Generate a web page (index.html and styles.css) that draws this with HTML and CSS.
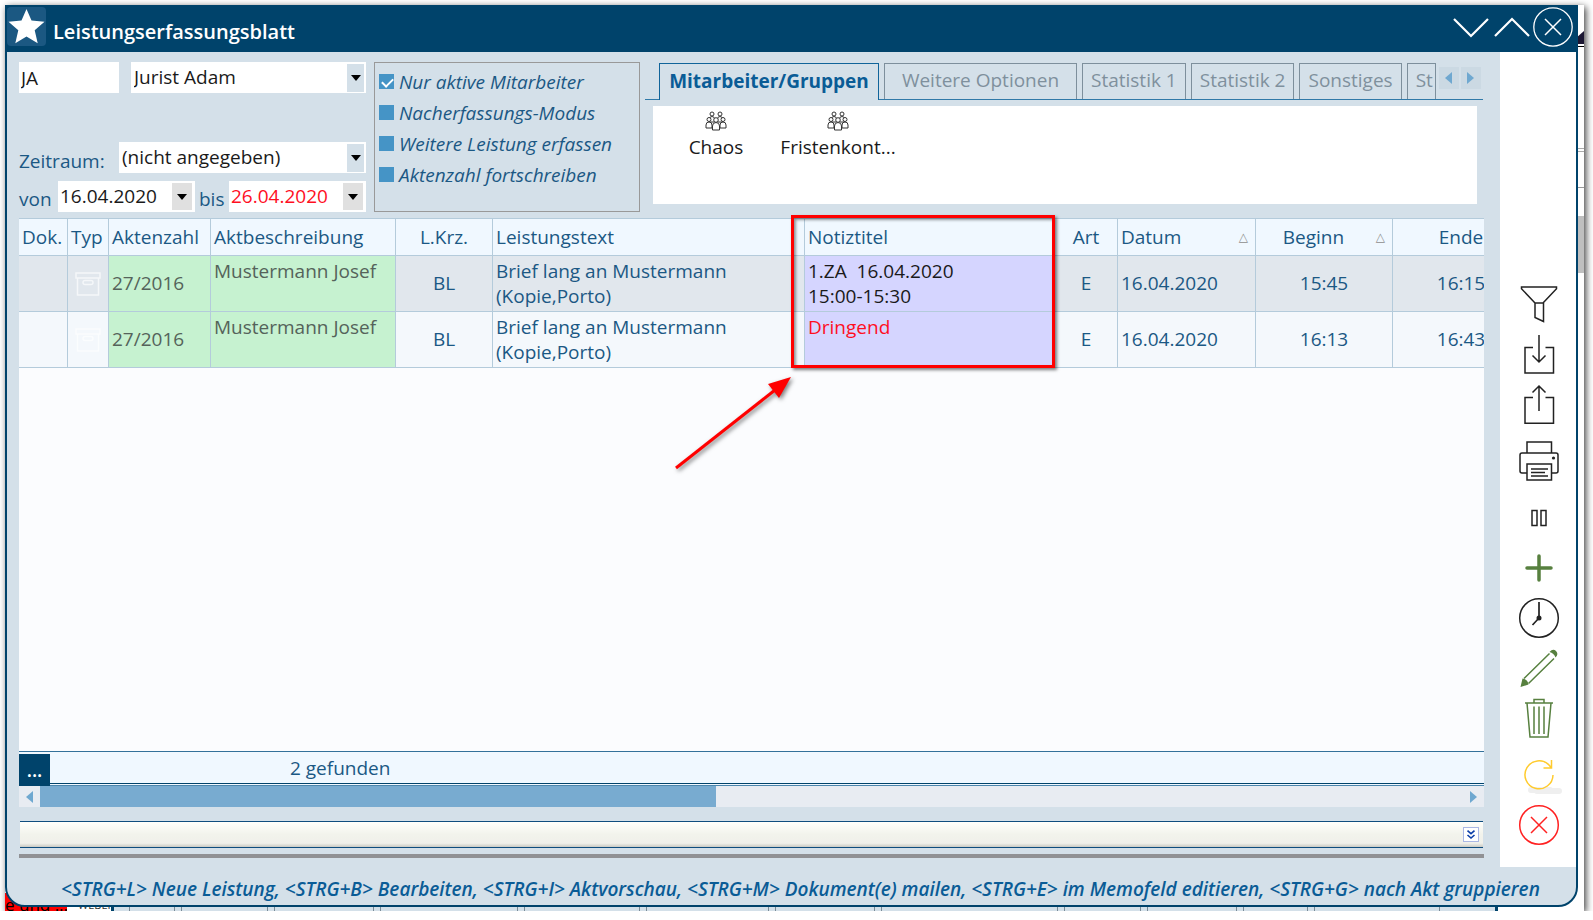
FILE: index.html
```html
<!DOCTYPE html>
<html lang="de">
<head>
<meta charset="utf-8">
<title>Leistungserfassungsblatt</title>
<link rel="stylesheet" href="styles.css">
</head>
<body>
<svg class="defs" aria-hidden="true">
  <symbol id="people" viewBox="0 0 22 20">
    <g fill="#fff" stroke="#333" stroke-width="1">
      <circle cx="7" cy="3" r="2"/><circle cx="15" cy="3" r="2"/>
      <path d="M4.500 11V8q0-2.500 2.500-2.500T9.500 8v3zM12.500 11V8q0-2.500 2.500-2.500T17.500 8v3z"/>
      <circle cx="4" cy="8.500" r="2"/><circle cx="18" cy="8.500" r="2"/>
      <path d="M1 17v-3q0-3 3-3t3 3v3zM15 17v-3q0-3 3-3t3 3v3z"/>
      <circle cx="11" cy="9" r="2.300"/>
      <path d="M7.500 19v-4q0-3.500 3.500-3.500t3.500 3.500v4z"/>
    </g>
  </symbol>
  <symbol id="box" viewBox="0 0 26 24">
    <g fill="none" stroke="#fff" stroke-opacity=".65" stroke-width="1.500">
      <path d="M1 1h24v5H1zM2.500 6v17h21V6"/><rect x="8" y="8.500" width="10" height="4" rx="2"/>
    </g>
  </symbol>
</svg>

<div class="desktop">
  <div class="behind" aria-hidden="true">
    <div class="behind-right"><i class="shade"></i><i class="rule"></i><i class="rule-a"></i><i class="rule-b"></i><i class="thumb"></i></div>
    <div class="behind-bottom">
      <span class="alert">e und ...</span><span class="name">WEBER</span>
      <span class="cell c15"></span><span class="cell c46"></span><span class="cell c87"></span><span class="cell c100"></span><span class="cell c138"></span><span class="cell c116"></span><span class="cell c123"></span><span class="cell c100"></span><span class="cell c177"></span><span class="cell c77"></span><span class="cell c90"></span><span class="cell c65"></span><span class="cell c126"></span><span class="cell c58"></span><span class="blank"></span>
    </div>
  </div>

  <div class="window">
    <header class="titlebar">
      <svg class="star" viewBox="0 0 39 39" aria-hidden="true"><path fill="#fff" d="M19.500 2l5 11.500 13 1.200-9.800 8.600 3 13-11.200-6.800-11.200 6.800 3-13L1.500 14.700l13-1.200z"/></svg>
      <h1>Leistungserfassungsblatt</h1>
      <button type="button" aria-label="Minimieren"><svg viewBox="0 0 40 40"><path d="M3 12l17 17 17-17" stroke-width="2.200"/></svg></button>
      <button type="button" aria-label="Maximieren"><svg viewBox="0 0 40 40"><path d="M3 29l17-17 17 17" stroke-width="2.200"/></svg></button>
      <button type="button" aria-label="Schließen"><svg viewBox="0 0 40 40"><circle cx="20" cy="20" r="19.200" stroke-width="1.300"/><path d="M12 12l16 16M28 12L12 28" stroke-width="1.500"/></svg></button>
    </header>

    <div class="body">
      <main>
        <div class="top">
          <form class="filters">
            <div class="line">
              <input class="field code" type="text" value="JA" aria-label="Kürzel">
              <div class="combo"><select class="field" aria-label="Mitarbeiter"><option>Jurist Adam</option></select><span class="arrow"></span></div>
            </div>
            <div class="line period">
              <label for="zeitraum">Zeitraum:</label>
              <div class="combo"><select class="field" id="zeitraum"><option>(nicht angegeben)</option></select><span class="arrow"></span></div>
            </div>
            <div class="line dates">
              <label for="von">von</label>
              <div class="date"><input id="von" type="text" value="16.04.2020"><button type="button" aria-label="Kalender von"></button></div>
              <label class="bis" for="bis">bis</label>
              <div class="date late"><input id="bis" type="text" value="26.04.2020"><button type="button" aria-label="Kalender bis"></button></div>
            </div>
          </form>

          <div class="checks">
            <label><input type="checkbox" checked><span>Nur aktive Mitarbeiter</span></label>
            <label><input type="checkbox"><span>Nacherfassungs-Modus</span></label>
            <label><input type="checkbox"><span>Weitere Leistung erfassen</span></label>
            <label><input type="checkbox"><span>Aktenzahl fortschreiben</span></label>
          </div>

          <section class="groups">
            <div class="tabs">
              <button type="button" class="tab active">Mitarbeiter/Gruppen</button>
              <button type="button" class="tab wide">Weitere Optionen</button>
              <button type="button" class="tab">Statistik 1</button>
              <button type="button" class="tab">Statistik 2</button>
              <button type="button" class="tab">Sonstiges</button>
              <button type="button" class="tab cut">St</button>
              <div class="tab-nav"><button type="button" class="prev" aria-label="Zurück"></button><button type="button" class="next" aria-label="Weiter"></button></div>
            </div>
            <div class="panel">
              <div class="group"><svg><use href="#people"/></svg><span>Chaos</span></div>
              <div class="group"><svg><use href="#people"/></svg><span>Fristenkont...</span></div>
            </div>
          </section>
        </div>

        <div class="grid">
          <table>
            <colgroup><col class="w-dok"><col class="w-typ"><col class="w-zahl"><col class="w-akt"><col class="w-krz"><col class="w-text"><col class="w-notiz"><col class="w-art"><col class="w-datum"><col class="w-zeit"><col class="w-zeit"></colgroup>
            <thead>
              <tr><th>Dok.</th><th>Typ</th><th>Aktenzahl</th><th>Aktbeschreibung</th><th class="mid">L.Krz.</th><th>Leistungstext</th><th>Notiztitel</th><th class="mid">Art</th><th><div class="sort"><span>Datum</span><i>△</i></div></th><th class="mid"><div class="sort"><span>Beginn</span><i>△</i></div></th><th class="mid">Ende</th></tr>
            </thead>
            <tbody>
              <tr><td></td><td class="type"><svg><use href="#box"/></svg></td><td class="green">27/2016</td><td class="green high">Mustermann Josef</td><td class="mid">BL</td><td class="high">Brief lang an Mustermann (Kopie,Porto)</td><td class="note high">1.ZA&nbsp; 16.04.2020<br>15:00-15:30</td><td class="mid">E</td><td>16.04.2020</td><td class="mid">15:45</td><td class="mid">16:15</td></tr>
              <tr><td></td><td class="type"><svg><use href="#box"/></svg></td><td class="green">27/2016</td><td class="green high">Mustermann Josef</td><td class="mid">BL</td><td class="high">Brief lang an Mustermann (Kopie,Porto)</td><td class="note high urgent">Dringend</td><td class="mid">E</td><td>16.04.2020</td><td class="mid">16:13</td><td class="mid">16:43</td></tr>
            </tbody>
          </table>
        </div>

        <div class="status"><button type="button">...</button><span>2 gefunden</span></div>
        <div class="scroll"><button type="button" class="prev" aria-label="Nach links"></button><div class="track"><div class="handle"></div></div><button type="button" class="next" aria-label="Nach rechts"></button></div>
        <div class="drawer"><button type="button" aria-label="Aufklappen"><svg viewBox="0 0 16 15"><path d="M4 3l4 3.500L12 3M4 8l4 3.500L12 8" fill="none" stroke="#0c3fa8" stroke-width="1.800"/></svg></button></div>
        <hr>
      </main>

      <aside>
        <div class="tools">
          <button type="button" aria-label="Filter"><svg viewBox="0 0 40 40"><path d="M2.500 3h35v1.800L24 19H16L2.500 4.800zM16 19v14.500l8.500 4V19"/></svg></button>
          <button type="button" aria-label="Importieren"><svg viewBox="0 0 40 40"><path d="M14 13.500H6V39h28.500V13.500h-8M20 1v27M13.500 21.500L20 28l6.500-6.500"/></svg></button>
          <button type="button" aria-label="Exportieren"><svg viewBox="0 0 40 40"><path d="M14 13.500H6V39.200h28.500V13.500h-8M20 2v25M13.500 8.500L20 2l6.500 6.500"/></svg></button>
        </div>
        <div class="tools">
          <button type="button" aria-label="Drucken"><svg viewBox="0 0 40 40"><path d="M8 12V1h24.500v11M8 32H3q-2 0-2-2V14q0-2 2-2h34q2 0 2 2v16q0 2-2 2h-5M8 23h24.500v16H8zM12 28h17M12 31.500h14M12 35h17"/><circle cx="34.500" cy="17" r="1.600" fill="#222" stroke="none"/></svg></button>
        </div>
        <div class="tools">
          <button type="button" aria-label="Pause"><svg viewBox="0 0 40 40"><path d="M13 12.500h5v15h-5zM22 12.500h5v15h-5z"/></svg></button>
          <button type="button" class="green-ink" aria-label="Hinzufügen"><svg viewBox="0 0 40 40"><path d="M20 8v24M8 20h24" stroke-width="3.500" stroke-linecap="round"/></svg></button>
          <button type="button" aria-label="Zeit"><svg viewBox="0 0 40 40"><circle cx="20" cy="20" r="19.300"/><path d="M20 4v16l-6.500 7" stroke-width="1.700"/><circle cx="20" cy="20" r="2.500" fill="#222" stroke="none"/></svg></button>
          <button type="button" class="green-ink" aria-label="Bearbeiten"><svg viewBox="0 0 40 40"><path d="M5 30.500L30.500 5.500M9.500 35.500L35 10.500"/><path d="M3.500 30.500l-2 8.500 8-2.500q-.5-5-6-6zM30.500 4q3.500-4 6.500-1t-.5 6.500q-1.500-4.500-6-5.500z" fill="#57803f" stroke="none"/></svg></button>
          <button type="button" class="green-ink" aria-label="Löschen"><svg viewBox="0 0 40 40"><path d="M6 5h28M15 5V1.500h10V5M8 5l3 34h18l3-34M15 8.500V36M20 8.500V36M25 8.500V36"/></svg></button>
        </div>
        <div class="tools">
          <button type="button" class="yellow-ink" aria-label="Aktualisieren"><svg viewBox="0 0 40 40"><path d="M12 35h19M18 36h22" stroke="#efefef" stroke-width="6" stroke-linecap="round"/><path d="M34 20a14 14 0 1 1-4-10l2.500 3M32.500 5v8H24.500"/></svg></button>
          <button type="button" class="red-ink" aria-label="Schließen"><svg viewBox="0 0 40 40"><circle cx="20" cy="20" r="19.300"/><path d="M12 12l16 16M28 12L12 28"/></svg></button>
        </div>
      </aside>
    </div>

    <footer>&lt;STRG+L&gt; Neue Leistung, &lt;STRG+B&gt; Bearbeiten, &lt;STRG+I&gt; Aktvorschau, &lt;STRG+M&gt; Dokument(e) mailen, &lt;STRG+E&gt; im Memofeld editieren, &lt;STRG+G&gt; nach Akt gruppieren</footer>
  </div>

  <div class="highlight" aria-hidden="true"></div>
  <svg class="pointer" viewBox="0 0 124 100" aria-hidden="true"><path d="M3 95L102 17" stroke="#f00" stroke-width="3"/><path d="M118 4L95 11l11 14z" fill="#f00"/></svg>
</div>
</body>
</html>
```

FILE: styles.css
```css
* { box-sizing: border-box; }
body {
  margin: 0;
  background: #fff;
  color: #1b5884;
  font: 19px/25px "Open Sans", "Noto Sans", sans-serif;
}
button, input, select { font: inherit; color: inherit; margin: 0; padding: 0; border: 0; border-radius: 0; background: none; }
svg { display: block; }
.defs { display: none; }

.desktop {
  position: relative;
  display: flex;
  height: calc(100vh - 14px);
  margin: 5px 9px 0 5px;
  padding: 0 6px 4px 0;
  background: #fff;
  box-shadow: 2px 2px 7px rgba(0, 0, 0, .75);
}

/* Application partly visible behind the window */
.behind { position: absolute; inset: 0; overflow: hidden; }
.behind-right { position: absolute; top: 0; right: 0; width: 6px; height: 100%; }
.behind-right i { position: absolute; left: 0; width: 6px; height: 1px; background: #999; }
.behind-right .shade { top: 26px; height: 13px; background: #1c1733; clip-path: polygon(0 40%, 100% 0, 100% 100%, 0 100%); }
.behind-right .rule { top: 41px; background: #000; }
.behind-right .rule-a { top: 143px; height: 4px; background: none; border: solid #aaa; border-width: 1px 0; }
.behind-right .rule-b { top: 182px; }
.behind-right .thumb { top: 211px; height: 57px; background: #bfbfbf; }
.behind-bottom { position: absolute; left: 0; right: 0; bottom: 0; display: flex; height: 18px; background: #d4e0e9; white-space: nowrap; }
.behind-bottom span { flex: none; }
.behind-bottom .alert { width: 62px; overflow: hidden; background: #f00; color: #000; font-size: 17px; line-height: 24px; }
.behind-bottom .name { width: 47px; overflow: hidden; padding-left: 11px; background: #fff; border-right: 3px solid #00436b; color: #333; font-size: 11px; line-height: 24px; }
.behind-bottom .cell { margin-right: 6px; border: solid #7a8b97; border-width: 0 1px; }
.behind-bottom .c15 { width: 15px; margin-right: 0; border-width: 0; }
.c46 { width: 46px; } .c65 { width: 65px; } .c77 { width: 77px; } .c87 { width: 87px; } .c90 { width: 90px; }
.c100 { width: 100px; } .c116 { width: 116px; } .c123 { width: 123px; } .c138 { width: 138px; } .c177 { width: 177px; }
.behind-bottom .c126 { width: 126px; margin-right: 0; }
.behind-bottom .c58 { width: 58px; border-width: 0 3px 0 0; border-color: #00436b; margin-right: 0; }
.behind-bottom .blank { flex: 1; background: #fff; }

.window {
  position: relative;
  display: flex;
  flex: 1;
  flex-direction: column;
  min-width: 0;
  overflow: hidden;
  border: 2px solid #00436b;
  border-radius: 0 0 20px 20px;
  background: #d4e0e9;
}
.titlebar { display: flex; flex: none; align-items: center; gap: 1px; height: 45px; padding-right: 3px; background: #00436b; color: #fff; }
.star { width: 39px; height: 39px; margin-bottom: 6px; border-radius: 4px; background: #1b5882; }
h1 { flex: 1; margin: 4px 0 0 6px; font-size: 20px; font-weight: 600; line-height: 26px; }
.titlebar button { width: 40px; height: 40px; margin-bottom: 5px; }
.titlebar button svg { fill: none; stroke: #fff; }

.body { display: flex; flex: 1; min-height: 0; }
main { display: flex; flex: 1; flex-direction: column; min-width: 0; padding: 10px 16px 9px 12px; }

.top { display: flex; flex: none; height: 156px; }
.filters { flex: none; width: 347px; }
.line { display: flex; gap: 12px; height: 31px; }
.field { width: 100%; height: 31px; background: #fff; color: #1a1a1a; }
.code { flex: none; width: 100px; padding-left: 2px; }
.combo { position: relative; flex: 1; }
.combo select { appearance: none; padding-left: 2px; border: 1px solid #fff; }
.arrow { position: absolute; top: 2px; right: 2px; width: 17px; height: 28px; background: #d4e0e9; pointer-events: none; }
.arrow::after, .date button::after {
  content: "";
  display: block;
  margin: 11px auto 0;
  width: 0;
  border: solid transparent;
  border-width: 6px 5px 0;
  border-top-color: #000;
}
.period { margin-top: 49px; gap: 0; }
.period label { width: 100px; padding-top: 7px; }
.dates { margin-top: 8px; gap: 0; }
.dates label { width: 39px; padding-top: 6px; }
.dates .bis { width: 34px; padding-left: 4px; }
.date { display: flex; flex: 1; align-items: center; min-width: 0; padding: 0 3px 0 2px; background: #fff; color: #1a1a1a; }
.date input { flex: 1; width: 0; height: 31px; padding-bottom: 2px; }
.date button { width: 20px; height: 27px; background: #e0e0e0; }
.date button::after { margin-top: 0; }
.late input { color: #ff0f1f; }

.checks { display: flex; flex: none; flex-direction: column; gap: 6px; width: 266px; height: 150px; margin-left: 8px; padding: 7px 4px; border: 1px solid #999; font-style: italic; }
.checks label { display: flex; align-items: center; gap: 5px; height: 25px; white-space: nowrap; }
.checks input { appearance: none; position: relative; flex: none; width: 15px; height: 15px; margin-bottom: 2px; background: #4594c6; }
.checks input:checked::after { content: ""; position: absolute; left: 5px; top: 2px; width: 5px; height: 9px; border: solid #fff; border-width: 0 2px 2px 0; transform: rotate(45deg); }

.groups { flex: 1; min-width: 0; margin-left: 5px; padding-right: 1px; }
.tabs { display: flex; gap: 5px; height: 38px; padding: 1px 0 0 14px; background: linear-gradient(#3079a8, #3079a8) bottom / 100% 1px no-repeat; white-space: nowrap; }
.tab { flex: none; height: 36px; padding: 0 8px 3px; border: 1px solid #7d8f9c; border-bottom: 0; color: #7f909d; overflow: hidden; }
.tab.active { width: 220px; height: 37px; padding: 0 0 1px; border-color: #10649a; background: #d4e0e9; color: #0a5c96; font-weight: 700; }
.tab.wide { width: 193px; }
.tab.cut { width: 29px; padding-right: 0; text-align: left; }
.tab-nav { display: flex; gap: 2px; margin: 4px 0 0 -2px; }
.tab-nav button { width: 20px; height: 22px; background: #cbd9e3; }
.prev::after, .next::after { content: ""; display: block; width: 0; margin: 0 auto; border: solid transparent; border-width: 6px 0 6px 7px; border-left-color: #6fa8d0; }
.prev::after { border-width: 6px 7px 6px 0; border-right-color: #6fa8d0; }
.panel { display: flex; height: 98px; margin: 6px 6px 0 8px; padding: 5px 0 0 2px; background: #fff; color: #1a1a1a; }
.group { display: flex; flex-direction: column; align-items: center; gap: 4px; width: 122px; }
.group svg { width: 22px; height: 20px; }

.grid { flex: 1; min-height: 0; overflow: hidden; background: #fbfcfe; }
table { width: 1511px; table-layout: fixed; border-collapse: separate; border-spacing: 0; border-top: 1px solid #b4cbdb; }
.w-dok { width: 49px; } .w-typ { width: 41px; } .w-zahl { width: 102px; } .w-akt { width: 185px; }
.w-krz { width: 97px; } .w-text { width: 312px; } .w-notiz { width: 250px; } .w-art { width: 63px; }
.w-datum { width: 138px; } .w-zeit { width: 137px; }
th, td { padding: 0 3px; border: solid #b4cbdb; border-width: 0 1px 1px 0; text-align: left; font-weight: 400; white-space: nowrap; }
th { height: 37px; background: #f0f8ff; }
td { height: 56px; white-space: normal; }
tbody tr:nth-child(odd) { background: #e1e7ed; }
tbody tr:nth-child(even) { background: #f4f8fc; }
th.mid, td.mid { text-align: center; }
.high { vertical-align: top; padding-top: 3px; }
td.green { background: #c6f2d0; color: #55635a; }
td.note { background: #d5d5ff; color: #1a1a1a; }
td.urgent { color: #ff0f1f; }
.type svg { width: 26px; height: 24px; margin: 0 auto; }
.sort { display: flex; align-items: center; justify-content: space-between; padding-right: 4px; }
.mid .sort span { flex: 1; padding-right: 8px; }
.sort i { font: 12px/12px "DejaVu Sans", sans-serif; color: #8d8d8d; }

.status { display: flex; flex: none; height: 35px; border-top: 1px solid #33719a; background: #f0f8ff; box-shadow: inset 0 -1px #4b86ad, inset 0 -2px #f0f8ff, inset 0 -3px #00436b; }
.status button { width: 31px; height: 32px; margin-top: 2px; background: #00436b; color: #fff; font-weight: 600; }
.status span { padding: 4px 0 0 240px; }
.scroll { display: flex; flex: none; height: 21px; background: #e8ecf2; }
.scroll button { width: 21px; }
.track { flex: 1; }
.handle { width: 47.5%; height: 100%; background: #78abd0; }
.drawer { display: flex; flex: none; align-items: center; justify-content: flex-end; height: 27px; margin: 14px 1px 0; padding-right: 4px; border: solid #0f4d7e; border-width: 1px 0; background: linear-gradient(#fffffb, #f2f3ec 50%, #f0f0ea 85%, #c9c9c2); }
.drawer button { width: 16px; height: 15px; border: 1px solid #a9b7e4; background: #fff; }
hr { flex: none; width: 100%; height: 4px; margin: 6px 0 0; border: 0; background: #909194; }

aside { display: flex; flex: none; flex-direction: column; align-items: center; justify-content: flex-end; gap: 17px; width: 76px; padding: 0 0 22px 2px; background: #fff; }
.tools { display: flex; flex-direction: column; gap: 10px; color: #222; }
.tools button { width: 40px; height: 40px; }
.tools svg { fill: none; stroke: currentColor; stroke-width: 1.5; overflow: visible; }
.tools .green-ink { color: #57803f; }
.tools .yellow-ink { color: #ffcb2e; }
.tools .red-ink { color: #f22; }

footer { flex: none; height: 38px; padding: 10px 0 0 54px; color: #0a5c96; font-style: italic; font-weight: 600; white-space: nowrap; }

/* Callout drawn over the note column */
.highlight { position: absolute; left: 786px; top: 210px; width: 264px; height: 153px; border: 3px solid #f00; box-shadow: 2px 2px 3px rgba(0, 0, 0, .5), inset 2px 2px 3px rgba(0, 0, 0, .4); }
.pointer { position: absolute; left: 668px; top: 368px; width: 124px; height: 100px; filter: drop-shadow(2px 2px 2px rgba(0, 0, 0, .5)); }
```
